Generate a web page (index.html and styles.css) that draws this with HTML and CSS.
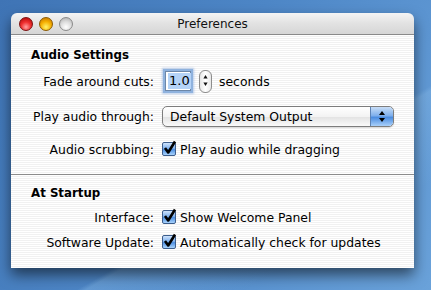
FILE: index.html
```html
<!DOCTYPE html>
<html lang="en">
<head>
    <meta charset="UTF-8">
    <title>Preferences</title>
    <link rel="stylesheet" href="styles.css">
</head>
<body>
    <div class="window">
        <div class="titlebar">
            <div class="lights">
                <span class="light close"></span>
                <span class="light minimize"></span>
                <span class="light zoom"></span>
            </div>
            <div class="title">Preferences</div>
            <div></div>
        </div>

        <div class="content">
            <div class="section first">
                <h2>Audio Settings</h2>
                <div class="row row-fade">
                    <label>Fade around cuts:</label>
                    <div class="control">
                        <span class="textfield"><span class="selected">1.0</span></span>
                        <span class="stepper">
                            <svg width="13" height="23" viewBox="0 0 13 23">
                                <path d="M6.5 5 L9 9 L4 9 Z" fill="#111"/>
                                <path d="M6.5 18 L9 14 L4 14 Z" fill="#111"/>
                            </svg>
                        </span>
                        <span>seconds</span>
                    </div>
                </div>
                <div class="row row-popup">
                    <label>Play audio through:</label>
                    <div class="control">
                        <div class="popup">
                            <span class="popup-text">Default System Output</span>
                            <span class="popup-arrows">
                                <svg width="22" height="19" viewBox="0 0 22 19">
                                    <path d="M11 4 L14 8 L8 8 Z" fill="#000"/>
                                    <path d="M11 15 L14 11 L8 11 Z" fill="#000"/>
                                </svg>
                            </span>
                        </div>
                    </div>
                </div>
                <div class="row row-check">
                    <label>Audio scrubbing:</label>
                    <div class="control">
                        <span class="checkbox">
                            <svg width="15" height="16" viewBox="0 0 15 16">
                                <path d="M3 8 L6.2 12.5 L13 1.5" fill="none" stroke="#000" stroke-width="2.6" stroke-linejoin="round"/>
                            </svg>
                        </span>
                        <span>Play audio while dragging</span>
                    </div>
                </div>
            </div>

            <div class="separator"></div>

            <div class="section">
                <h2>At Startup</h2>
                <div class="row row-small">
                    <label>Interface:</label>
                    <div class="control">
                        <span class="checkbox">
                            <svg width="15" height="16" viewBox="0 0 15 16">
                                <path d="M3 8 L6.2 12.5 L13 1.5" fill="none" stroke="#000" stroke-width="2.6" stroke-linejoin="round"/>
                            </svg>
                        </span>
                        <span>Show Welcome Panel</span>
                    </div>
                </div>
                <div class="row row-small">
                    <label>Software Update:</label>
                    <div class="control">
                        <span class="checkbox">
                            <svg width="15" height="16" viewBox="0 0 15 16">
                                <path d="M3 8 L6.2 12.5 L13 1.5" fill="none" stroke="#000" stroke-width="2.6" stroke-linejoin="round"/>
                            </svg>
                        </span>
                        <span>Automatically check for updates</span>
                    </div>
                </div>
            </div>
        </div>
    </div>
</body>
</html>
```

FILE: styles.css
```css
html, body {
    margin: 0;
    height: 100%;
}

body {
    font-family: 'DejaVu Sans', 'Liberation Sans', sans-serif;
    font-size: 12.4px;
    color: #000;
    background:
        linear-gradient(150deg, transparent 62%, rgba(140, 190, 235, 0.35) 63%, transparent 80%),
        linear-gradient(120deg, #3f74b5 0%, #4d86c6 45%, #5a93d0 70%, #6aa2da 100%);
    padding-top: 13px;
    box-sizing: border-box;
    overflow: hidden;
}

.window {
    margin-left: 11px;
    width: 403px;
    height: 255px;
    border-radius: 6px 6px 0 0;
    overflow: hidden;
    box-shadow: 0 7px 14px rgba(0, 0, 0, 0.55);
    display: flex;
    flex-direction: column;
}

.titlebar {
    height: 21px;
    display: grid;
    grid-template-columns: 1fr auto 1fr;
    align-items: center;
    background: linear-gradient(#f4f4f4, #e2e2e2 50%, #d6d6d6);
    border-bottom: 1px solid #8a8a8a;
}

.lights {
    display: flex;
    gap: 6px;
    padding-left: 8px;
    padding-top: 1px;
}

.light {
    width: 14px;
    height: 14px;
    border-radius: 50%;
    box-sizing: border-box;
}

.close {
    background: radial-gradient(circle at 50% 75%, #ffa0a0 0, #f03030 45%, #a80000 100%);
    border: 1px solid #7a1010;
}

.minimize {
    background: radial-gradient(circle at 50% 75%, #fff36a 0, #f5ae00 50%, #bd6d00 100%);
    border: 1px solid #8a5a00;
}

.zoom {
    background: radial-gradient(circle at 50% 75%, #ffffff 0, #dcdcdc 50%, #a8a8a8 100%);
    border: 1px solid #8a8a8a;
}

.title {
    font-size: 12px;
    color: #111;
    padding-top: 1px;
}

.content {
    flex: 1;
    background: repeating-linear-gradient(#ffffff 0, #ffffff 1px, #f1f1f1 1px, #f1f1f1 2px);
    display: flex;
    flex-direction: column;
}

.section {
    display: flex;
    flex-direction: column;
}

.section.first {
    padding-top: 12px;
}

h2 {
    margin: 0;
    padding-left: 20px;
    font-size: 11.8px;
    line-height: 16px;
    font-weight: bold;
}

.row {
    display: grid;
    grid-template-columns: 143px 1fr;
    column-gap: 8px;
    align-items: center;
    height: 26px;
}

.row label {
    text-align: right;
}

.control {
    display: flex;
    align-items: center;
}

.row-fade {
    margin-top: 5px;
}

.row-popup {
    margin-top: 9px;
}

.row-check {
    margin-top: 7px;
}

.row-small {
    height: 22px;
}

h2 + .row-small {
    margin-top: 5px;
}

.row-small + .row-small {
    margin-top: 3px;
}

.textfield {
    margin-left: 3px;
    width: 26px;
    height: 20px;
    box-sizing: border-box;
    border: 1px solid #6d87a8;
    background: #fff;
    box-shadow: 0 0 0 2px #8fb2de, 0 0 2px 3px rgba(120, 160, 215, 0.5);
    display: flex;
    align-items: center;
    padding-left: 2px;
    font-size: 13px;
}

.selected {
    background: #b5d3f7;
    line-height: 16px;
    padding: 0 1px;
}

.stepper {
    margin-left: 8px;
    width: 13px;
    height: 23px;
    box-sizing: border-box;
    border: 1px solid #8d8d8d;
    border-radius: 6px;
    background: linear-gradient(90deg, #e6e6e6, #ffffff 50%, #e8e8e8);
    display: flex;
    justify-content: center;
    align-items: center;
}

.stepper svg {
    margin-top: -1px;
}

.stepper + span {
    margin-left: 7px;
}

.popup {
    width: 232px;
    height: 21px;
    box-sizing: border-box;
    border: 1px solid #7d7d7d;
    border-radius: 5px;
    background: linear-gradient(#ffffff, #f3f3f3 50%, #e4e4e4 55%, #fafafa);
    display: flex;
    align-items: center;
    overflow: hidden;
    box-shadow: 0 1px 1px rgba(0, 0, 0, 0.15);
}

.popup-text {
    flex: 1;
    padding-left: 7px;
}

.popup-arrows {
    width: 22px;
    height: 19px;
    background: linear-gradient(#c9def7, #7fb0ec 45%, #4c8de0 55%, #a9d0fa);
    border-left: 1px solid #5d83b5;
    border-radius: 0 4px 4px 0;
}

.checkbox {
    width: 14px;
    height: 14px;
    box-sizing: border-box;
    border: 1px solid #3c5d8c;
    border-radius: 2px;
    background: linear-gradient(#cfe3fb, #7fb1ee 45%, #4d8fe2 55%, #a9d3fc);
    margin-right: 4px;
    position: relative;
}

.checkbox svg {
    position: absolute;
    left: -1px;
    top: -3px;
}

.separator {
    margin-top: 12px;
    height: 1px;
    background: #8c8c8c;
    margin-bottom: 10px;
}
```
